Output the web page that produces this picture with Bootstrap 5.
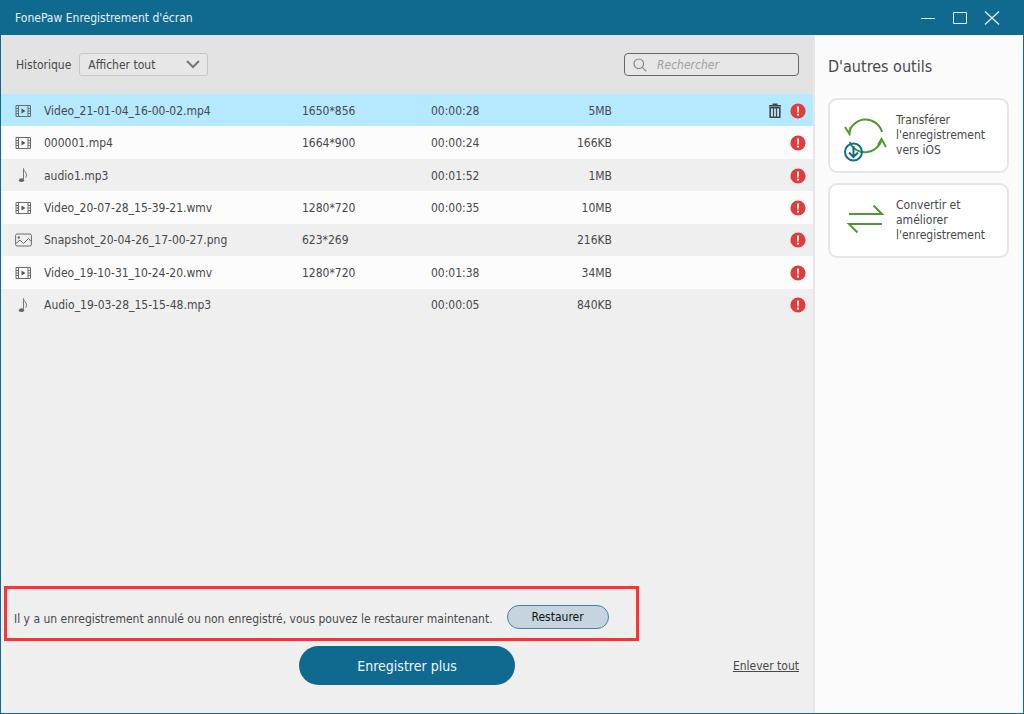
<!DOCTYPE html>
<html lang="fr">
<head>
<meta charset="utf-8">
<meta name="viewport" content="width=device-width, initial-scale=1">
<title>FonePaw Enregistrement d'écran</title>
<link href="https://cdn.jsdelivr.net/npm/bootstrap@5.3.0/dist/css/bootstrap.min.css" rel="stylesheet">
<style>
  :root { --brand: #106a8f; --ink: #48484a; }
  body { font: 12px/20px Tahoma, "DejaVu Sans Condensed", "Noto Sans", sans-serif; color: var(--ink); background: #efefef; }
  .app-window { border: 1px solid var(--brand); }
  .title-bar { background: var(--brand); color: #e6f1f6; height: 34px; padding: 0 23px 0 14px; }
  .title-bar button { color: #e6f1f6; width: 16px; height: 16px; }
  .tool-bar { background: #e3e3e3; height: 59px; padding: 0 14px 0 15px; }
  .tool-bar .form-select {
    width: 129px; height: 23px; padding: 0 28px 0 8px; border: 1px solid #c6c6c6; border-radius: 3px; color: inherit; font-size: inherit; line-height: 20px;
    background: #e7e7e7 url("data:image/svg+xml,%3Csvg xmlns='http://www.w3.org/2000/svg' viewBox='0 0 14 9'%3E%3Cpath d='M1 1l6 6 6-6' fill='none' stroke='%23777' stroke-width='2'/%3E%3C/svg%3E") no-repeat right 7px center / 14px 9px;
  }
  .search-box { width: 175px; height: 23px; border: 1px solid #666; border-radius: 4px; background: #e7e7e7; padding: 0 8px; gap: 10px; }
  .search-box .form-control { font-size: inherit; line-height: 20px; font-style: italic; color: var(--ink); }
  .search-box .form-control::placeholder { color: #a0a0a0; opacity: 1; }
  .history { height: 227px; table-layout: fixed; }
  .history td { padding: 1px 0 0; white-space: nowrap; line-height: 20px; }
  .history tr:nth-child(even) { background: #fcfcfc; }
  .history tr.chosen { background: #b5e9ff; }
  .history svg { display: block; }
  .col-kind { width: 43px; } .col-dims { width: 129px; } .col-time { width: 80px; } .col-size { width: 101px; } .col-acts { width: 201px; }
  .history .kind { padding-left: 14px; }
  .history .acts { padding-right: 7px; }
  .side-panel { width: 210px; border-left: 2px solid #e6e6e6; background: #fbfbfb; padding: 21px 14px 21px 13px; }
  .side-panel h2 { font-size: 16px; line-height: 22px; font-weight: 400; margin-bottom: 20px; }
  .tool-list { gap: 10px; }
  .tool-card { --bs-btn-color: var(--ink); min-height: 75px; border: 2px solid #e6e6e6; border-radius: 9px; background: #fff; font-size: 12px; line-height: 15px; padding: 0 4px 0 13px; }
  .tool-card svg { margin-right: 7px; }
  .notice { border: 3px solid #fb3333; padding: 16px 27px 9px 7px; gap: 14px; margin: 0 3px 5px; }
  .btn-restore { --bs-btn-color: #111; --bs-btn-bg: #c5d4de; --bs-btn-border-color: #3c86a6; --bs-btn-hover-bg: #b4c9d6; width: 102px; height: 24px; padding: 0; font-size: 12px; line-height: 20px; }
  .btn-record { --bs-btn-color: #f0f7fa; --bs-btn-bg: var(--brand); --bs-btn-hover-bg: #0d5a7a; --bs-btn-hover-color: #fff; grid-column: 2; width: 216px; height: 39px; padding: 0; font-size: 14px; line-height: 20px; }
  .foot-bar { grid-template-columns: 1fr auto 1fr; padding: 0 14px 28px; }
  .foot-bar a { justify-self: end; }
</style>
</head>
<body>
<svg class="d-none" aria-hidden="true">
  <symbol id="film" viewBox="0 0 17 14" fill="none" stroke="#6c6c6c">
    <path d="M1 1.500h14.500v11H1zM3.500 1.500v11M13 1.500v11M1 4.500h2M1 7h2M1 9.500h2M13 4.500h2M13 7h2M13 9.500h2"/>
    <path d="M6.500 4.500l4 2.500-4 2.500z" fill="#555" stroke="none"/>
  </symbol>
  <symbol id="note" viewBox="0 0 17 15" fill="none">
    <ellipse cx="6.500" cy="12.200" rx="2.600" ry="1.900" fill="#666"/>
    <path d="M8.500 12V.5c0 3 3 3.500 3 6.500 0 1.200-.4 2-.8 2.700" stroke="#777"/>
  </symbol>
  <symbol id="photo" viewBox="0 0 17 14" fill="none" stroke="#6c6c6c">
    <rect x=".6" y="1" width="15.800" height="12" rx="1.500"/>
    <circle cx="3.800" cy="4.500" r="1.200" fill="#6c6c6c" stroke="none"/>
    <path d="M1 10.500l4-3.500 3.500 3.500 5-5 2.800 3"/>
  </symbol>
  <symbol id="alert" viewBox="0 0 16 16">
    <circle cx="8" cy="8" r="7.600" fill="#e03c3c"/>
    <path d="M7 3.500h2l-.3 6H7.300z" fill="#fff"/><circle cx="8" cy="11.700" r="1.100" fill="#fff"/>
  </symbol>
</svg>
<div class="app-window d-flex flex-column min-vh-100">
  <header class="title-bar d-flex align-items-center justify-content-between">
    <span>FonePaw Enregistrement d'écran</span>
    <div class="d-flex gap-3">
      <button class="btn p-0 border-0 d-flex" aria-label="Réduire"><svg width="16" height="16" fill="none" stroke="currentColor"><path d="M1 8.500h14"/></svg></button>
      <button class="btn p-0 border-0 d-flex" aria-label="Agrandir"><svg width="16" height="16" fill="none" stroke="currentColor"><path d="M1.500 2.500h13v11h-13z"/></svg></button>
      <button class="btn p-0 border-0 d-flex" aria-label="Fermer"><svg width="16" height="16" fill="none" stroke="currentColor" stroke-width="1.200"><path d="M1 1.500l14 13M15 1.500l-14 13"/></svg></button>
    </div>
  </header>
  <div class="d-flex flex-grow-1">
    <main class="d-flex flex-column flex-grow-1">
      <div class="tool-bar d-flex align-items-center">
        <label for="filter" class="me-2">Historique</label>
        <select id="filter" class="form-select"><option>Afficher tout</option><option>Vidéo</option><option>Audio</option></select>
        <div class="search-box d-flex align-items-center ms-auto">
          <svg class="flex-shrink-0" width="14" height="14" fill="none" stroke="#888" stroke-width="1.200"><circle cx="5.800" cy="5.800" r="4.800"/><path d="M9.300 9.300l4 4"/></svg>
          <input type="search" class="form-control border-0 bg-transparent shadow-none p-0" placeholder="Rechercher" aria-label="Rechercher">
        </div>
      </div>
      <table class="history w-100">
        <colgroup><col class="col-kind"><col><col class="col-dims"><col class="col-time"><col class="col-size"><col class="col-acts"></colgroup>
        <tbody>
          <tr class="chosen"><td class="kind"><svg width="17" height="14"><use href="#film"/></svg></td><td>Video_21-01-04_16-00-02.mp4</td><td>1650*856</td><td>00:00:28</td><td class="text-end">5MB</td><td class="acts"><div class="d-flex justify-content-end align-items-center gap-2">
            <button class="btn p-0 border-0" aria-label="Supprimer"><svg width="14" height="16" fill="none" stroke="#454550"><path d="M4.500 1.500h5" stroke-width="2"/><path d="M1 2.800h12" stroke-width="1.600"/><path d="M2.200 4.700h9.600v9.500H2.200z" stroke-width="1.600"/><path d="M5.500 5v9M8.500 5v9" stroke-width="1.200"/></svg></button>
            <svg width="16" height="16"><use href="#alert"/></svg></div></td></tr>
          <tr><td class="kind"><svg width="17" height="14"><use href="#film"/></svg></td><td>000001.mp4</td><td>1664*900</td><td>00:00:24</td><td class="text-end">166KB</td><td class="acts"><svg class="ms-auto" width="16" height="16"><use href="#alert"/></svg></td></tr>
          <tr><td class="kind"><svg width="17" height="15"><use href="#note"/></svg></td><td>audio1.mp3</td><td></td><td>00:01:52</td><td class="text-end">1MB</td><td class="acts"><svg class="ms-auto" width="16" height="16"><use href="#alert"/></svg></td></tr>
          <tr><td class="kind"><svg width="17" height="14"><use href="#film"/></svg></td><td>Video_20-07-28_15-39-21.wmv</td><td>1280*720</td><td>00:00:35</td><td class="text-end">10MB</td><td class="acts"><svg class="ms-auto" width="16" height="16"><use href="#alert"/></svg></td></tr>
          <tr><td class="kind"><svg width="17" height="14"><use href="#photo"/></svg></td><td>Snapshot_20-04-26_17-00-27.png</td><td>623*269</td><td></td><td class="text-end">216KB</td><td class="acts"><svg class="ms-auto" width="16" height="16"><use href="#alert"/></svg></td></tr>
          <tr><td class="kind"><svg width="17" height="14"><use href="#film"/></svg></td><td>Video_19-10-31_10-24-20.wmv</td><td>1280*720</td><td>00:01:38</td><td class="text-end">34MB</td><td class="acts"><svg class="ms-auto" width="16" height="16"><use href="#alert"/></svg></td></tr>
          <tr><td class="kind"><svg width="17" height="15"><use href="#note"/></svg></td><td>Audio_19-03-28_15-15-48.mp3</td><td></td><td>00:00:05</td><td class="text-end">840KB</td><td class="acts"><svg class="ms-auto" width="16" height="16"><use href="#alert"/></svg></td></tr>
        </tbody>
      </table>
      <div class="notice d-flex align-items-end align-self-start mt-auto">
        <span>Il y a un enregistrement annulé ou non enregistré, vous pouvez le restaurer maintenant.</span>
        <button class="btn btn-restore rounded-pill">Restaurer</button>
      </div>
      <div class="foot-bar d-grid align-items-center">
        <button class="btn btn-record border-0 rounded-pill">Enregistrer plus</button>
        <a href="#" class="text-reset">Enlever tout</a>
      </div>
    </main>
    <aside class="side-panel flex-shrink-0">
      <h2>D'autres outils</h2>
      <div class="tool-list d-grid">
        <button class="tool-card btn d-flex align-items-center text-start">
          <svg class="flex-shrink-0" width="46" height="52" viewBox="843 110 46 52" fill="none" stroke="#4f9a2e" stroke-width="2"><path d="M849 133a17 17 0 0 1 33-1M845 127l4.500 7 1-7M849.500 142a17 17 0 0 0 32-2M878 145l3.500-6 4.500 8"/><circle cx="853.500" cy="152" r="8.500" stroke="#146c91"/><path d="M853.500 146v11M849 152.500l4.500 4.500 4.500-4.500" stroke="#146c91"/></svg>
          <span>Transférer<br>l'enregistrement<br>vers iOS</span>
        </button>
        <button class="tool-card btn d-flex align-items-center text-start">
          <svg class="flex-shrink-0" width="46" height="48" viewBox="843 196 46 48" fill="none" stroke="#4f9a2e" stroke-width="2"><path d="M849 213h33l-8.500-8.500M882 223h-33l8.500 8.500"/></svg>
          <span>Convertir et<br>améliorer<br>l'enregistrement</span>
        </button>
      </div>
    </aside>
  </div>
</div>
<script src="https://cdn.jsdelivr.net/npm/bootstrap@5.3.0/dist/js/bootstrap.bundle.min.js"></script>
</body>
</html>
